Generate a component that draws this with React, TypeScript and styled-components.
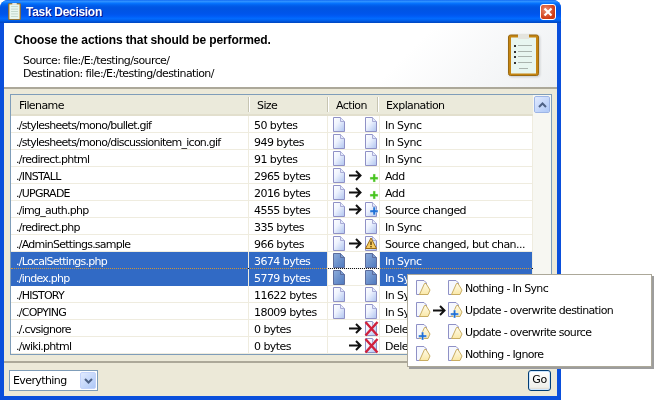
import React from "react";
import styled, { createGlobalStyle } from "styled-components";

const Global = createGlobalStyle`
  html, body { margin: 0; padding: 0; background: #fff; }
  body { font-family: "DejaVu Sans", Verdana, sans-serif; font-size: 11px; color: #000; }
`;

const Stage = styled.div`
  position: relative;
  width: 660px;
  height: 400px;
  overflow: hidden;
`;
const Win = styled.div`
  box-sizing: border-box;
  width: 561px;
  height: 400px;
  display: flex;
  flex-direction: column;
  background: #0a4fdc;
  border-radius: 8px 8px 0 0;
  overflow: hidden;
  padding-bottom: 4px;
`;
const TitleBar = styled.div`
  flex: none;
  height: 23px;
  box-sizing: border-box;
  display: flex;
  align-items: center;
  padding: 0 5px 0 8px;
  gap: 5px;
  background: linear-gradient(180deg,#0058ee 0%,#3593ff 4%,#288eff 8%,#127dff 12%,#036ffc 16%,#0262ee 22%,#0057e5 30%,#0054e3 40%,#0055eb 60%,#005bf5 70%,#026afe 80%,#0062ef 88%,#0052d6 94%,#0046c0 100%);
`;
const TitleText = styled.span`
  flex: 1;
  color: #fff;
  font-family: "Liberation Sans", Arial, sans-serif;
  font-weight: bold;
  font-size: 12px;
  letter-spacing: -0.3px;
  text-shadow: 1px 1px #0f1089;
`;
const Close = styled.div`
  width: 14px;
  height: 14px;
  border: 1px solid #fff;
  border-radius: 3px;
  background: radial-gradient(circle at 35% 35%, #ea8c70, #cf3a12 70%);
  display: flex;
  align-items: center;
  justify-content: center;
`;
const Body = styled.div`
  flex: 1;
  margin: 0 4px;
  display: flex;
  flex-direction: column;
  min-height: 0;
`;
const Header = styled.div`
  flex: none;
  height: 64px;
  box-sizing: border-box;
  display: flex;
  justify-content: space-between;
  padding: 11px 18px 0 10px;
  background: linear-gradient(135deg,#fff 70%,#eef0f2 100%);
`;
const Heading = styled.div`
  font-family: "Liberation Sans", Arial, sans-serif;
  font-weight: bold;
  font-size: 12px;
  line-height: 13px;
  letter-spacing: -0.12px;
`;
const Paths = styled.div`
  margin: 7px 0 0 9px;
`;
const PathLine = styled.div`
  line-height: 13px;
  letter-spacing: -0.6px;
`;
const Panel = styled.div`
  flex: 1;
  min-height: 0;
  display: flex;
  flex-direction: column;
  background: #ece9d8;
  border-top: 2px solid #aca899;
`;
const ListBox = styled.div`
  flex: none;
  margin: 5px 5px 0 6px;
  height: 261px;
  box-sizing: border-box;
  border: 1px solid #7f9db9;
  background: #fff;
  display: flex;
`;
const Table = styled.div`
  width: 522px;
  display: flex;
  flex-direction: column;
`;
const HeadRow = styled.div`
  height: 21px;
  display: grid;
  grid-template-columns: 238px 79px 50px 155px;
  background: #ebeadb;
  box-shadow: inset 0 -2px #e2dfcd;
  align-items: center;
`;
const HeadCell = styled.div<{ $last?: boolean }>`
  height: 15px;
  line-height: 17px;
  padding-left: 8px;
  margin-bottom: 2px;
  border-right: ${(p) => (p.$last ? "none" : "1px solid #c7c5b2")};
  box-shadow: ${(p) => (p.$last ? "none" : "1px 0 #fff")};
  letter-spacing: -0.6px;
`;
const Row = styled.div`
  height: 17px;
  box-sizing: border-box;
  display: grid;
  grid-template-columns: 238px 79px 52px 153px;
  position: relative;
  border-bottom: 1px solid #efecdf;
`;
const Cell = styled.div<{ $sel?: boolean; $tight?: boolean }>`
  box-sizing: border-box;
  height: 17px;
  line-height: 19px;
  padding-left: 5px;
  white-space: nowrap;
  overflow: hidden;
  letter-spacing: ${(p) => (p.$tight ? "-0.75px" : "-0.55px")};
  border-right: 1px solid #efecdf;
  background: ${(p) => (p.$sel ? "#316ac5" : "transparent")};
  color: ${(p) => (p.$sel ? "#fff" : "#000")};
`;
const ActionCell = styled.div`
  box-sizing: border-box;
  height: 16px;
  border-right: 1px solid #efecdf;
  display: grid;
  grid-template-columns: 12px 20px 12px;
  padding: 1px 0 0 5px;
  align-items: start;
  justify-items: center;
`;
const ArrowSlot = styled.span`
  display: block;
  padding-top: 2px;
`;
const Focus = styled.div`
  position: absolute;
  left: 0;
  right: 0;
  top: -1px;
  border-top: 1px dotted #fff;
  mix-blend-mode: difference;
  pointer-events: none;
`;
const Scrollbar = styled.div`
  width: 18px;
  background: #f7f7f2;
  padding: 1px 1px 0 1px;
  box-sizing: border-box;
`;
const ScrollBtn = styled.div`
  width: 16px;
  height: 17px;
  box-sizing: border-box;
  border: 1px solid #fff;
  outline: 1px solid #9db5e6;
  outline-offset: -1px;
  border-radius: 2px;
  background: linear-gradient(135deg,#e1eafe,#aec8f7);
  display: flex;
  align-items: center;
  justify-content: center;
`;
const Footer = styled.div`
  flex: 1;
  margin-top: 6px;
  border-top: 2px solid #aca899;
  display: flex;
  justify-content: space-between;
  align-items: flex-start;
  padding: 7px 6px 0 5px;
`;
const Select = styled.div`
  width: 89px;
  height: 21px;
  box-sizing: border-box;
  border: 1px solid #7f9db9;
  background: #fff;
  display: flex;
  justify-content: space-between;
  align-items: center;
  padding: 1px 1px 1px 3px;
  letter-spacing: -0.6px;
`;
const SelBtn = styled.div`
  width: 16px;
  height: 17px;
  box-sizing: border-box;
  border-radius: 2px;
  background: linear-gradient(135deg,#e1eafe,#aec8f7);
  border: 1px solid #c3d3fb;
  display: flex;
  align-items: center;
  justify-content: center;
`;
const Go = styled.div`
  width: 23px;
  height: 21px;
  box-sizing: border-box;
  border: 1px solid #003c74;
  border-radius: 3px;
  background: linear-gradient(180deg,#fff,#f0f0ea 85%,#d6d0c5);
  box-shadow: inset 0 0 0 1px #cee7ff;
  text-align: center;
  line-height: 18px;
  letter-spacing: -0.4px;
`;
const Popup = styled.div`
  position: absolute;
  left: 407px;
  top: 274px;
  width: 245px;
  height: 93px;
  box-sizing: border-box;
  background: #fff;
  border: 1px solid #aca899;
  box-shadow: 2px 2px 0 #9d9d9d;
  padding: 2px 0 0 8px;
`;
const MenuRow = styled.div`
  height: 22px;
  display: grid;
  grid-template-columns: 17px 15px 17px 1fr;
  align-items: center;
  justify-items: start;
  letter-spacing: -0.67px;
`;

type Overlay = "none" | "plus" | "add" | "warn" | "del";

const Badge: React.FC<{ kind: Overlay }> = ({ kind }) => {
  if (kind === "plus")
    return <path d="M8 5h2.4v3H13v2.4h-2.6V13H8v-2.6H5V8h3z" fill="#1e6fd6" stroke="#fff" strokeWidth=".4" />;
  if (kind === "add")
    return <path d="M8 6h2.4v3H13v2.4h-2.6V14H8v-2.6H5V9h3z" fill="#46c41e" stroke="#d9f5cc" strokeWidth=".4" />;
  if (kind === "warn")
    return (
      <g>
        <path d="M6 2 L11.5 12.5 H0.5 Z" fill="#f6cb63" stroke="#9a6a14" strokeWidth="1" strokeLinejoin="round" />
        <rect x="5.3" y="5.5" width="1.4" height="3.6" fill="#5a3a08" />
        <rect x="5.3" y="10" width="1.4" height="1.4" fill="#5a3a08" />
      </g>
    );
  if (kind === "del")
    return <path d="M0.5 1 L12.5 14.5 M12.5 1 L0.5 14.5" stroke="#d0203c" strokeWidth="2.4" fill="none" />;
  return null;
};

const Doc: React.FC<{ kind?: Overlay; dark?: boolean }> = ({ kind = "none", dark }) => {
  const id = dark ? "docDark" : "docLight";
  return (
    <svg width="12" height="15" viewBox="0 0 12 15" style={{ display: "block", overflow: "visible" }}>
      <defs>
        <linearGradient id="docLight" x1="0" y1="0" x2="1" y2="1">
          <stop offset="0" stopColor="#fff" />
          <stop offset="0.4" stopColor="#eef3fe" />
          <stop offset="1" stopColor="#aec3ef" />
        </linearGradient>
        <linearGradient id="docDark" x1="0" y1="0" x2="1" y2="1">
          <stop offset="0" stopColor="#8eaddc" />
          <stop offset="1" stopColor="#4d78bd" />
        </linearGradient>
      </defs>
      {kind !== "add" && (
        <>
          <path d="M0.5 0.5H7.5L11.5 4.5V14.5H0.5Z" fill={`url(#${id})`} stroke={dark ? "#5c6c9c" : "#8f91c6"} />
          <path d="M7.5 0.5V4.5H11.5" fill={dark ? "#7f9fd2" : "#e3e9fa"} stroke={dark ? "#5c6c9c" : "#a9abd6"} />
        </>
      )}
      <Badge kind={kind} />
    </svg>
  );
};

const Arrow: React.FC = () => (
  <svg width="13" height="11" viewBox="0 0 13 11" style={{ display: "block" }}>
    <path d="M0 5.5H11M7 1L11.5 5.5L7 10" stroke="#111" strokeWidth="2" fill="none" />
  </svg>
);

const MenuDoc: React.FC<{ plus?: boolean }> = ({ plus }) => (
  <svg width="15" height="16" viewBox="0 0 15 16" style={{ display: "block", overflow: "visible" }}>
    <defs>
      <linearGradient id="wedge" x1="0" y1="0" x2="0" y2="1">
        <stop offset="0" stopColor="#fffbe8" />
        <stop offset="1" stopColor="#fae8a8" />
      </linearGradient>
    </defs>
    <path d="M0.5 0.5H8L10.5 3V14.5H0.5Z" fill="#f6f8fe" stroke="#8f91c6" />
    <path d="M3.5 14.5L8.5 3.5H10L14 10L12 14.5Z" fill="url(#wedge)" stroke="#c9ad62" strokeLinejoin="round" />
    {plus && <path d="M5.5 8h2.2v3H10.6v2.2H7.7V16H5.5v-2.8H2.5V11h3z" fill="#1e6fd6" stroke="#fff" strokeWidth=".4" />}
  </svg>
);

const Clipboard: React.FC<{ small?: boolean }> = ({ small }) => (
  <svg
    width={small ? 13 : 31}
    height={small ? 17 : 42}
    viewBox="0 0 31 42"
    style={{ display: "block", filter: small ? "none" : "drop-shadow(1px 1px 1px #c4c6c8)" }}
  >
    <rect x="0.5" y="1" width="30" height="40.5" rx="2" fill="#c58512" stroke="#9a6a12" />
    <rect x="3" y="3.5" width="25" height="36" fill="#e8f6f0" />
    <rect x="10" y="0" width="11" height="5" fill="#e4e4de" />
    {!small &&
      [10, 16, 21, 27].map((y) => (
        <g key={y}>
          <rect x="6" y={y + 1} width="2" height="2" fill="#333" />
          <rect x="10" y={y + 1} width="14" height="1" fill="#aab4ae" />
        </g>
      ))}
    {!small && <rect x="11" y="34" width="9" height="1" fill="#aab4ae" />}
    {small && [8, 14, 20, 26, 32].map((y) => <rect key={y} x="7" y={y} width="17" height="2" fill="#b9d0c6" />)}
  </svg>
);

const Chevron: React.FC<{ up?: boolean }> = ({ up }) => (
  <svg width="9" height="6" viewBox="0 0 9 6">
    <path d={up ? "M1 5L4.5 1.5L8 5" : "M1 1L4.5 4.5L8 1"} stroke="#4d6185" strokeWidth="2" fill="none" />
  </svg>
);

type R = { f: string; s: string; l?: boolean; a?: boolean; r: Overlay | "plain"; e: string; sel?: boolean; focus?: boolean };
const rows: R[] = [
  { f: "./stylesheets/mono/bullet.gif", s: "50 bytes", l: true, r: "plain", e: "In Sync" },
  { f: "./stylesheets/mono/discussionitem_icon.gif", s: "949 bytes", l: true, r: "plain", e: "In Sync" },
  { f: "./redirect.phtml", s: "91 bytes", l: true, r: "plain", e: "In Sync" },
  { f: "./INSTALL", s: "2965 bytes", l: true, a: true, r: "add", e: "Add" },
  { f: "./UPGRADE", s: "2016 bytes", l: true, a: true, r: "add", e: "Add" },
  { f: "./img_auth.php", s: "4555 bytes", l: true, a: true, r: "plus", e: "Source changed" },
  { f: "./redirect.php", s: "335 bytes", l: true, r: "plain", e: "In Sync" },
  { f: "./AdminSettings.sample", s: "966 bytes", l: true, a: true, r: "warn", e: "Source changed, but chan..." },
  { f: "./LocalSettings.php", s: "3674 bytes", l: true, r: "plain", e: "In Sync", sel: true },
  { f: "./index.php", s: "5779 bytes", l: true, r: "plain", e: "In Sync", sel: true, focus: true },
  { f: "./HISTORY", s: "11622 bytes", l: true, r: "plain", e: "In Sync" },
  { f: "./COPYING", s: "18009 bytes", l: true, r: "plain", e: "In Sync" },
  { f: "./.cvsignore", s: "0 bytes", a: true, r: "del", e: "Delete" },
  { f: "./wiki.phtml", s: "0 bytes", a: true, r: "del", e: "Delete" },
];

const menu = [
  { l: false, a: false, r: false, t: "Nothing - In Sync" },
  { l: false, a: true, r: true, t: "Update - overwrite destination" },
  { l: true, a: false, r: false, t: "Update - overwrite source" },
  { l: false, a: false, r: false, t: "Nothing - Ignore" },
];

export default function App() {
  return (
    <Stage>
      <Global />
      <Win>
        <TitleBar>
          <Clipboard small />
          <TitleText>Task Decision</TitleText>
          <Close>
            <svg width="10" height="10" viewBox="0 0 10 10">
              <path d="M1.5 1.5L8.5 8.5M8.5 1.5L1.5 8.5" stroke="#fff" strokeWidth="2.2" />
            </svg>
          </Close>
        </TitleBar>
        <Body>
          <Header>
            <div>
              <Heading>Choose the actions that should be performed.</Heading>
              <Paths>
                <PathLine>Source: file:/E:/testing/source/</PathLine>
                <PathLine>Destination: file:/E:/testing/destination/</PathLine>
              </Paths>
            </div>
            <Clipboard />
          </Header>
          <Panel>
            <ListBox>
              <Table>
                <HeadRow>
                  <HeadCell>Filename</HeadCell>
                  <HeadCell>Size</HeadCell>
                  <HeadCell>Action</HeadCell>
                  <HeadCell $last>Explanation</HeadCell>
                </HeadRow>
                {rows.map((r) => (
                  <Row key={r.f}>
                    <Cell $sel={r.sel} $tight>{r.f}</Cell>
                    <Cell $sel={r.sel}>{r.s}</Cell>
                    <ActionCell>
                      <span>{r.l && <Doc dark={r.sel} />}</span>
                      <ArrowSlot>{r.a && <Arrow />}</ArrowSlot>
                      <Doc dark={r.sel} kind={r.r === "plain" ? "none" : r.r} />
                    </ActionCell>
                    <Cell $sel={r.sel}>{r.e}</Cell>
                    {r.focus && <Focus />}
                  </Row>
                ))}
              </Table>
              <Scrollbar>
                <ScrollBtn>
                  <Chevron up />
                </ScrollBtn>
              </Scrollbar>
            </ListBox>
            <Footer>
              <Select>
                Everything
                <SelBtn>
                  <Chevron />
                </SelBtn>
              </Select>
              <Go>Go</Go>
            </Footer>
          </Panel>
        </Body>
      </Win>
      <Popup>
        {menu.map((m) => (
          <MenuRow key={m.t}>
            <MenuDoc plus={m.l} />
            <span>{m.a && <Arrow />}</span>
            <MenuDoc plus={m.r} />
            <span>{m.t}</span>
          </MenuRow>
        ))}
      </Popup>
    </Stage>
  );
}
